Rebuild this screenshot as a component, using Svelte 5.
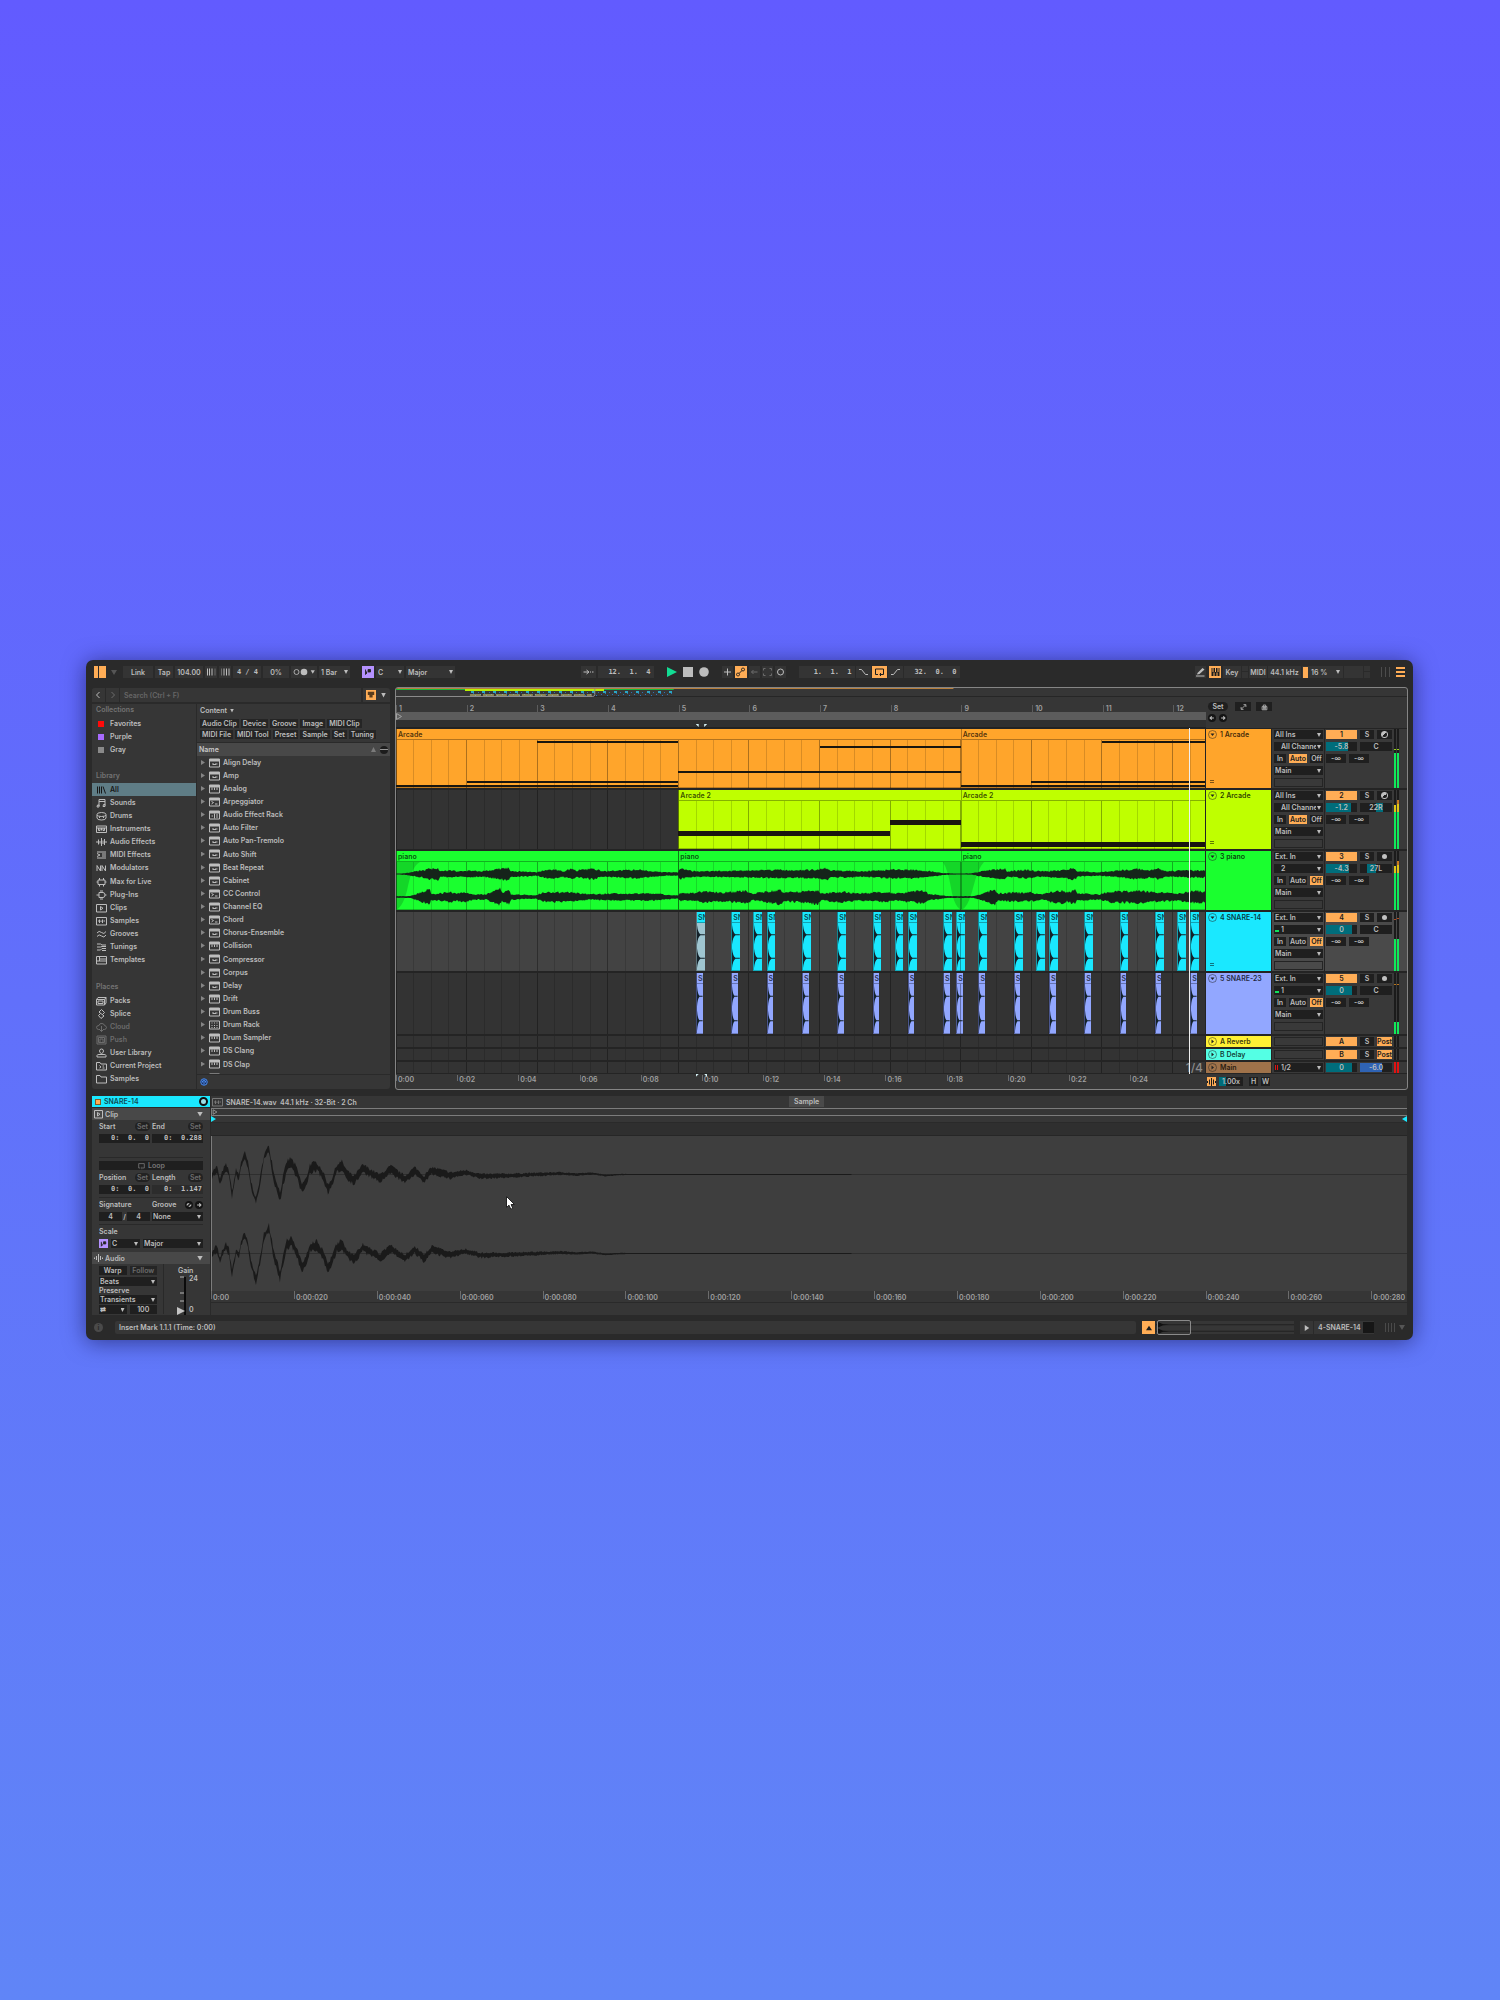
<script lang="ts">
type IconName = keyof typeof icons;
type SideItem = { name: string; icon: IconName; muted?: boolean; active?: boolean };
type Note = { from: number; to: number; top: number; thick?: boolean };
type Clip = { name: string; from: number; to: number; wave?: boolean; selected?: boolean };
type Track = {
	id: number;
	name: string;
	color: string;
	input: string;
	channel: string;
	monitor: 'Auto' | 'Off';
	midi?: boolean;
	menu?: boolean;
	volume: string;
	volumeFill: number;
	pan: string;
	panFrom?: number;
	panTo?: number;
	meter: number;
	peak: number;
	hot?: string;
	clips: Clip[];
	notes?: Note[];
};

// number of bars and time units visible in the arrangement
const BARS = 11.46;
const SECONDS = 13.24;
const SAMPLE_UNITS = 14.43;

const icons = {
	all: 'M3 3v14M7 3v14M11 3v14M14 3l5 14',
	sounds: 'M6 16V3h12v12M6 7h12M3 14h3v4h-4zM15 13h3v4h-4z',
	drums: 'M2 7q0-4 9-4t9 4v7q0 4-9 4t-9-4zM2 8q2 3 9 3t9-3M7 11v3M15 11v3',
	instruments: 'M1 4h20v13h-20zM1 8h20M5 8v5h3v-5M11 8v5M14 8v5h3v-5',
	audio: 'M2 8v4M5 5v10M8 8v5M11 2v16M14 7v7M17 4v12M20 8v4',
	midi: 'M2 4h18M12 8h8M12 12h8M2 16h18M2 7l6 3-6 3',
	modulators: 'M2 16V5l7 11V5M12 16V5l7 11V5',
	max: 'M4 6h14v9h-14zM7 2v4M15 2v4M7 15v4M15 15v4M1 10h3M18 10h3',
	plugins: 'M1 10h5M18 10h3M6 5h8q4 0 4 5t-4 5h-8zM8 2h6M8 18h6',
	clips: 'M1 3h20v15h-20zM9 7l5 3.500-5 3.500z',
	samples: 'M1 3h20v15h-20zM4 10h3M7 7v7M10 9v3M13 7v7M15 10h3',
	grooves: 'M2 8q4-6 9-1t9-2M2 15q4-6 9-1t9-2',
	tunings: 'M2 4h7l3 2h8M2 10h7l3-1h8M2 16h7l3-3h8M12 17h8',
	templates: 'M1 3h20v15h-20zM7 3v9M1 12h20M7 8h14',
	packs: 'M1 7h16v11h-16zM1 7l3-4h16v11l-3 4M17 7l3-4M4 10h10v5h-10z',
	splice: 'M11 1l6 6-4 4 3 3-6 5-5-6 4-4-3-3zM8 7l6 6',
	cloud: 'M8 15H5q-4-1-4-4 0-4 5-4 1-5 6-4 4 0 5 4 4 1 4 4t-4 4h-3M11 8v11M8 16l3 3 3-3',
	push: 'M2 2h18v16h-18zM5 5h12v10h-12zM8 8h6v7h-6z',
	user: 'M11 2q4 0 4 4t-4 5q-4-1-4-5t4-4zM2 18v-3q0-2 4-2h10q4 0 4 2v3z',
	project: 'M1 18V3h7l2 3h11v12zM7 9l3 3-3 2M13 10h3M13 14h4',
	folder: 'M1 18V3h7l2 3h11v12z'
};

const collections = [
	{ name: 'Favorites', color: '#ff0a0a' },
	{ name: 'Purple', color: '#a86bff' },
	{ name: 'Gray', color: '#8a8a8a' }
];

const library: SideItem[] = [
	{ name: 'All', icon: 'all', active: true },
	{ name: 'Sounds', icon: 'sounds' },
	{ name: 'Drums', icon: 'drums' },
	{ name: 'Instruments', icon: 'instruments' },
	{ name: 'Audio Effects', icon: 'audio' },
	{ name: 'MIDI Effects', icon: 'midi' },
	{ name: 'Modulators', icon: 'modulators' },
	{ name: 'Max for Live', icon: 'max' },
	{ name: 'Plug-Ins', icon: 'plugins' },
	{ name: 'Clips', icon: 'clips' },
	{ name: 'Samples', icon: 'samples' },
	{ name: 'Grooves', icon: 'grooves' },
	{ name: 'Tunings', icon: 'tunings' },
	{ name: 'Templates', icon: 'templates' }
];

const places: SideItem[] = [
	{ name: 'Packs', icon: 'packs' },
	{ name: 'Splice', icon: 'splice' },
	{ name: 'Cloud', icon: 'cloud', muted: true },
	{ name: 'Push', icon: 'push', muted: true },
	{ name: 'User Library', icon: 'user' },
	{ name: 'Current Project', icon: 'project' },
	{ name: 'Samples', icon: 'folder' },
	{ name: 'Add Folder...', icon: 'folder' }
];

const filters = [
	['Audio Clip', 'Device', 'Groove', 'Image', 'MIDI Clip'],
	['MIDI File', 'MIDI Tool', 'Preset', 'Sample', 'Set', 'Tuning']
];

const deviceIcons: Record<string, string> = {
	fx: 'M6 12h4M12 12h5M8 13h6',
	inst: 'M6 7v5M11 7v5M16 7v5',
	midi: 'M5 9l4 2-4 3M12 14h5',
	rack: 'M11 7v10M5 12h3M14 10h4M14 14h4',
	pads: 'M5 6h2M10 6h2M15 6h2M5 11h2M10 11h2M15 11h2M5 15h2M10 15h2M15 15h2'
};

const devices = [
	['Align Delay', 'fx'],
	['Amp', 'fx'],
	['Analog', 'inst'],
	['Arpeggiator', 'midi'],
	['Audio Effect Rack', 'rack'],
	['Auto Filter', 'fx'],
	['Auto Pan-Tremolo', 'fx'],
	['Auto Shift', 'fx'],
	['Beat Repeat', 'fx'],
	['Cabinet', 'fx'],
	['CC Control', 'midi'],
	['Channel EQ', 'fx'],
	['Chord', 'midi'],
	['Chorus-Ensemble', 'fx'],
	['Collision', 'inst'],
	['Compressor', 'fx'],
	['Corpus', 'fx'],
	['Delay', 'fx'],
	['Drift', 'inst'],
	['Drum Buss', 'fx'],
	['Drum Rack', 'pads'],
	['Drum Sampler', 'inst'],
	['DS Clang', 'inst'],
	['DS Clap', 'inst'],
	['DS Cymbal', 'inst']
];

const snareHits = [
	4.25, 4.75, 5.0625, 5.25, 5.75, 6.25, 6.75, 7.0625, 7.25, 7.75, 7.9375, 8.25, 8.75, 9.0625,
	9.25, 9.75, 10.25, 10.75, 11.0625, 11.25
];
const ghostHits = snareHits.filter((hit) => hit % 1 !== 0.0625);

// insert marker drawn in both rulers
const selection = [4.24, 4.36];

const tracks: Track[] = [
	{
		id: 1,
		name: 'Arcade',
		color: 'orange',
		input: 'All Ins',
		channel: 'All Channels',
		monitor: 'Auto',
		midi: true,
		menu: true,
		volume: '-5.8',
		volumeFill: 70,
		pan: 'C',
		meter: 60,
		peak: 65,
		clips: [
			{ name: 'Arcade', from: 0, to: 8 },
			{ name: 'Arcade', from: 8, to: 12 }
		],
		notes: [
			{ from: 2, to: 4, top: 12 },
			{ from: 1, to: 4, top: 52 },
			{ from: 0, to: 4, top: 56 },
			{ from: 4, to: 8, top: 42 },
			{ from: 6, to: 8, top: 17 },
			{ from: 8, to: 12, top: 56 },
			{ from: 9, to: 12, top: 52 },
			{ from: 10, to: 12, top: 12 }
		]
	},
	{
		id: 2,
		name: 'Arcade',
		color: 'lime',
		input: 'All Ins',
		channel: 'All Channels',
		monitor: 'Auto',
		midi: true,
		menu: true,
		volume: '-1.2',
		volumeFill: 80,
		pan: '22R',
		panFrom: 50,
		panTo: 72,
		meter: 62,
		peak: 62,
		hot: 'yellow',
		clips: [
			{ name: 'Arcade 2', from: 4, to: 8 },
			{ name: 'Arcade 2', from: 8, to: 12 }
		],
		notes: [
			{ from: 4, to: 7, top: 41, thick: true },
			{ from: 7, to: 8, top: 30, thick: true },
			{ from: 8, to: 12, top: 52, thick: true }
		]
	},
	{
		id: 3,
		name: 'piano',
		color: 'green',
		input: 'Ext. In',
		channel: '2',
		monitor: 'Off',
		volume: '-4.3',
		volumeFill: 73,
		pan: '27L',
		panFrom: 23,
		panTo: 50,
		meter: 62,
		peak: 62,
		hot: 'yellow',
		clips: [
			{ name: 'piano', from: 0, to: 4 },
			{ name: 'piano', from: 4, to: 8 },
			{ name: 'piano', from: 8, to: 12 }
		]
	},
	{
		id: 4,
		name: 'SNARE-14',
		color: 'cyan',
		input: 'Ext. In',
		channel: '1',
		monitor: 'Off',
		menu: true,
		volume: '0',
		volumeFill: 83,
		pan: 'C',
		meter: 55,
		peak: 86,
		hot: 'red',
		clips: snareHits.map((hit, i) => ({
			name: 'SNARE-14',
			from: hit,
			to: hit + 0.125,
			wave: true,
			selected: i === 0
		}))
	},
	{
		id: 5,
		name: 'SNARE-23',
		color: 'blue',
		input: 'Ext. In',
		channel: '1',
		monitor: 'Off',
		volume: '0',
		volumeFill: 83,
		pan: 'C',
		meter: 19,
		peak: 80,
		hot: 'amber',
		clips: ghostHits.map((hit) => ({ name: 'SNARE-23', from: hit, to: hit + 0.0937, wave: true }))
	}
];

const returns = [
	{ id: 'A', name: 'Reverb', color: 'yellow' },
	{ id: 'B', name: 'Delay', color: 'aqua' }
];

const pct = (value: number, total: number): string => `${(value / total) * 100}%`;
const range = (n: number): number[] => Array.from({ length: n }, (_, i) => i);

function makeRandom(seed: number): () => number {
	let s = seed;
	return () => {
		s = (s * 16807) % 2147483647;
		return s / 2147483647;
	};
}

function sampleAt(points: number[][], x: number): number {
	for (let i = 1; i < points.length; i++) {
		const [x0, y0] = points[i - 1];
		const [x1, y1] = points[i];
		if (x <= x1) return y0 + ((y1 - y0) * (x - x0)) / (x1 - x0);
	}
	return points[points.length - 1][1];
}

// piano envelopes: [x, half height]
const pianoTop = [
	[0, 0.5], [9, 1], [17, 2.5], [27, 4], [34, 6], [42, 7], [44, 3], [55, 4], [64, 3], [74, 4],
	[84, 3], [94, 4], [103, 6], [113, 7], [115, 3], [127, 3], [140, 2], [153, 5], [160, 5],
	[167, 3], [175, 6], [180, 4], [197, 6], [207, 3], [223, 4], [243, 5], [257, 3], [270, 2],
	[282, 2], [284, 6], [293, 4], [300, 3], [350, 4], [384, 5], [394, 4], [424, 5], [431, 7],
	[434, 4], [454, 4], [464, 3], [494, 5], [514, 5], [537, 3], [547, 1], [565, 0.5], [577, 1],
	[590, 4], [599, 5], [609, 6], [611, 3], [631, 5], [644, 3], [661, 4], [671, 5], [679, 7],
	[681, 3], [704, 2], [724, 4], [741, 6], [754, 4], [762, 6], [771, 3], [787, 4], [809, 4]
];
const pianoBottom = [
	[0, 1], [13, 1], [20, 3], [27, 6], [34, 9], [35, 4], [44, 4], [55, 6], [60, 4], [69, 6],
	[77, 3], [90, 3], [104, 9], [106, 5], [113, 8], [115, 3], [140, 2], [147, 5], [153, 6],
	[177, 5], [193, 3], [220, 4], [257, 4], [277, 2], [282, 2], [284, 5], [293, 4], [307, 6],
	[327, 5], [350, 7], [357, 4], [384, 8], [389, 5], [404, 6], [422, 8], [425, 4], [447, 6],
	[461, 4], [491, 6], [497, 4], [527, 7], [532, 4], [551, 1], [577, 1], [590, 5], [599, 9],
	[602, 4], [617, 5], [634, 5], [644, 3], [667, 8], [671, 5], [679, 8], [681, 4], [704, 3],
	[714, 6], [741, 7], [764, 5], [781, 4], [801, 7], [809, 6]
];

function envelopePath(points: number[][], center: number, seed: number): string {
	const random = makeRandom(seed);
	const upper: string[] = [];
	const lower: string[] = [];
	for (let x = 0; x <= 809; x += 1) {
		const half = sampleAt(points, x);
		const up = half * (0.65 + random() * 0.4);
		const down = half * (0.65 + random() * 0.4);
		upper.push(`${x} ${(center - up).toFixed(1)}`);
		lower.unshift(`${x} ${(center + down).toFixed(1)}`);
	}
	return `M${upper.join('L')}L${lower.join('L')}Z`;
}

const pianoPath = envelopePath(pianoTop, 12, 11) + envelopePath(pianoBottom, 35, 29);

// sample curve: [x, offset upwards]
const snareCurve = [
	[0, 0], [3, 3], [5, 5], [8, -8], [11, 2], [14, 7], [17, 1], [20, -20], [24, 2], [27, -3],
	[29, 10], [33, 19], [36, 9], [39, -10], [44, -27], [48, -7], [52, 17], [57, 26], [59, 14],
	[63, -7], [66, -15], [68, -23], [71, -7], [75, 9], [79, 12], [84, 4], [90, -14], [94, -9],
	[98, 6], [105, 8], [110, 1], [116, -14], [120, -8], [125, 6], [130, 9], [135, 0], [142, -6],
	[151, 6], [161, 0], [168, -4], [179, 5], [193, -5], [203, 4], [212, -5], [220, 4], [238, -1],
	[254, 2], [270, -2], [300, -1], [349, 1], [365, 0], [381, 1], [394, -1], [408, 0], [1196, 0]
];

function snarePath(center: number, seed: number): string {
	const random = makeRandom(seed);
	const upper: string[] = [];
	const lower: string[] = [];
	for (let x = 0; x <= 640; x += 1) {
		const mid = center - sampleAt(snareCurve, x);
		const body = x < 60 ? 1 : x < 240 ? 2 : x < 420 ? 1.3 - (x - 240) / 240 : 0.4;
		const rough = x < 60 ? 4 : x < 420 ? 5 * (1 - (x - 60) / 360) : 0;
		upper.push(`${x} ${(mid - body - random() * rough).toFixed(1)}`);
		lower.unshift(`${x} ${(mid + body + random() * rough).toFixed(1)}`);
	}
	return `M${upper.join('L')}L${lower.join('L')}Z`;
}

const overviewDots = range(92).map((i) => ({
	x: 75 + i * 2.2,
	y: 3 + ((i * 7) % 5),
	tall: i % 5 === 0
}));
</script>

{#snippet icon(path: string)}
	<svg class="icon" viewBox="0 0 22 20" aria-hidden="true"><path d={path} /></svg>
{/snippet}

{#snippet drop(value: string, label: string, kind = '')}
	<span class="drop {kind}">
		<select aria-label={label}><option>{value}</option></select>
	</span>
{/snippet}

{#snippet grid()}
	<svg class="grid" aria-hidden="true">
		{#each range(46) as i (i)}
			<line
				x1={pct(i / 4, BARS)}
				x2={pct(i / 4, BARS)}
				y1="0"
				y2="100%"
				class:bar={i % 4 === 0}
			/>
		{/each}
	</svg>
{/snippet}

{#snippet fold(open: boolean)}
	<svg class="fold" viewBox="0 0 18 18" aria-hidden="true">
		<circle cx="9" cy="9" r="8" />
		<path d={open ? 'M5 7h8l-4 5z' : 'M7 5l5 4-5 4z'} />
	</svg>
{/snippet}

{#snippet meters(level: number, peak: number, hot = '')}
	<div class="meters {hot}">
		{#each [0, 1] as side (side)}
			<div class="meter">
				<i class="peak" style:bottom="{peak + (hot === 'red' ? side * 2 : 0)}%"></i>
				<i class="level" style:height="{level}%"></i>
			</div>
		{/each}
	</div>
{/snippet}

<main class="desktop">
	<div class="window">
		<header class="toolbar">
			<div class="group">
				<button class="layout" aria-label="Toggle browser"></button>
				<i class="tri dim layout-menu"></i>
				<button class="w30">Link</button>
				<button class="w18">Tap</button>
				<input class="w28" value="104.00" aria-label="Tempo" />
				<button class="w12" aria-label="Nudge down">
					<svg viewBox="0 0 22 20" class="icon"><path d="M3 3v14M7 3v14M12 3v14" /><path d="M18 3v14" opacity="0.4" /></svg>
				</button>
				<button class="w12" aria-label="Nudge up">
					<svg viewBox="0 0 22 20" class="icon"><path d="M8 3v14M13 3v14M18 3v14" /><path d="M3 3v14" opacity="0.4" /></svg>
				</button>
				<input class="w28 mono" value="4 / 4" aria-label="Time signature" />
				<button class="w26">0%</button>
				<button class="w26" aria-label="Metronome">
					<svg class="metro" viewBox="0 0 26 12"><circle cx="4" cy="6" r="3" /><circle cx="13" cy="6" r="4" class="solid" /><path d="M21 4h5l-2.500 4z" class="solid" /></svg>
				</button>
				{@render drop('1 Bar', 'Quantization', 'w31')}
				<button class="scale-toggle" aria-label="Scale mode">
					<svg viewBox="0 0 12 12"><path d="M3 3v6l2-2M6 3h3v3h-3z" /></svg>
				</button>
				{@render drop('C', 'Root note', 'w28')}
				{@render drop('Major', 'Scale', 'w49')}
			</div>
			<div class="space-before"></div>
			<div class="group">
				<button class="w15" aria-label="Follow">
					<svg class="icon" viewBox="0 0 22 20"><path d="M1 10h9M7 6l5 4-5 4M14 10h2M18 10h3" /></svg>
				</button>
				<input class="w56 mono" value="12.  1.  4" aria-label="Arrangement position" />
				<div class="transport">
					<button class="plain" aria-label="Play"><svg viewBox="0 0 10 10"><path d="M0 0l10 5-10 5z" fill="#12dc93" /></svg></button>
					<button class="plain" aria-label="Stop"><svg viewBox="0 0 10 10"><path d="M0 0h10v10h-10z" /></svg></button>
					<button class="plain" aria-label="Record"><svg viewBox="0 0 10 10"><circle cx="5" cy="5" r="4.800" /></svg></button>
				</div>
				<button class="w11" aria-label="Overdub">{@render icon('M11 3v14M4 10h14')}</button>
				<button class="w12 on" aria-label="Automation arm">{@render icon('M6 12a3 3 0 1 0 .1 0M16 2a3 3 0 1 0 .1 0M8 13l6-6')}</button>
				<button class="w11 muted" aria-label="Re-enable automation">{@render icon('M5 10h12M9 6l-4 4 4 4')}</button>
				<button class="w11 muted" aria-label="Capture">{@render icon('M3 7V3h4M15 3h4v4M19 13v4h-4M7 17H3v-4')}</button>
				<button class="w11" aria-label="Session record"><svg class="icon" viewBox="0 0 22 20"><circle cx="11" cy="10" r="6" /></svg></button>
			</div>
			<div class="group tight loop-group">
				<input class="w56 mono" value="1.  1.  1" aria-label="Loop start" />
				<button class="w15" aria-label="Punch in">{@render icon('M2 5h5l8 10h5')}</button>
				<button class="w15 on" aria-label="Loop">{@render icon('M8 15H3V4h16v11h-4M13 12v6M17 15h-6')}</button>
				<button class="w15" aria-label="Punch out">{@render icon('M2 15h5l8-10h5')}</button>
				<input class="w56 mono" value="32.  0.  0" aria-label="Loop length" />
			</div>
			<div class="space-after"></div>
			<div class="group tight">
				<button class="w11" aria-label="Draw mode"><svg class="icon pen" viewBox="0 0 22 20"><path d="M5 12l10-10 4 3-10 9-5 1z" /><path d="M2 17h17v2h-17z" /></svg></button>
				<button class="w12 on piano-keys" aria-label="Computer MIDI keyboard"><svg class="icon keys" viewBox="0 0 22 20"><path d="M3 2h16v16h-16z" /><path class="lines" d="M8 11v7M14 11v7M6 2v8M11 2v8M16 2v8" /></svg></button>
				<button class="w18">Key</button>
				<i class="lamp"></i>
				<button class="w18">MIDI</button>
				<button class="w33">44.1 kHz</button>
				<div class="cpu"><i></i>16 %<b class="tri small"></b></div>
				<i class="lamp wide"></i>
				<i class="lamp"></i>
				<i class="bars3"></i>
				<button class="menu" aria-label="Menu"></button>
			</div>
		</header>

		<div class="workspace">
			<aside class="browser">
				<div class="search">
					<button class="nav" aria-label="Back">{@render icon('M13 4l-6 6 6 6')}</button>
					<button class="nav muted" aria-label="Forward">{@render icon('M9 4l6 6-6 6')}</button>
					<input type="search" placeholder="Search (Ctrl + F)" aria-label="Search" />
					<button class="filter" aria-label="Filters"><svg viewBox="0 0 10 10"><path d="M1 1h8v4h-2v3h-4v-3h-2z" /></svg></button>
					<i class="tri filter-menu"></i>
				</div>
				<div class="browser-body">
					<nav class="sidebar">
						<h2>Collections</h2>
						<ul class="collections">
							{#each collections as item (item.name)}
								<li><a href="#{item.name}"><i class="swatch" style:background={item.color}></i>{item.name}</a></li>
							{/each}
						</ul>
						<h2>Library</h2>
						<ul>
							{#each library as item (item.name)}
								<li class:active={item.active}><a href="#{item.icon}">{@render icon(icons[item.icon])}{item.name}</a></li>
							{/each}
						</ul>
						<h2>Places</h2>
						<ul>
							{#each places as item (item.name)}
								<li class:muted={item.muted}><a href="#{item.icon}">{@render icon(icons[item.icon])}{item.name}</a></li>
							{/each}
						</ul>
					</nav>
					<section class="content">
						<div class="content-head">
							<h3>Content <i class="tri small"></i></h3>
							{#each filters as row, i (i)}
								<div class="tags">
									{#each row as tag (tag)}<button>{tag}</button>{/each}
								</div>
							{/each}
						</div>
						<div class="name-row">Name<span class="sort"></span><button class="more" aria-label="Columns"></button></div>
						<ul class="devices">
							{#each devices as [name, kind] (name)}
								<li>
									<i class="arrow"></i>
									<svg class="icon device" viewBox="0 0 22 20" aria-hidden="true">
										<path d="M1 2h20v16h-20z" />
										{#if kind !== 'pads'}<path class="cap" d="M1 3h20v3h-20z" />{/if}
										<path d={deviceIcons[kind]} />
									</svg>
									{name}
								</li>
							{/each}
						</ul>
						<div class="preview">
							<svg viewBox="0 0 16 16" aria-hidden="true"><circle cx="8" cy="8" r="6.500" /><path d="M8 6v7M5 9V6q3-4 6 0v3" /></svg>
						</div>
					</section>
				</div>
			</aside>

			<section class="arrangement">
				<svg class="overview" viewBox="0 0 1012 8" preserveAspectRatio="none" aria-hidden="true">
					<path d="M0 .5H558" stroke="#b9803c" />
					<path d="M0 1.500H278" stroke="#18b936" />
					<path d="M69 1.500H208" stroke="#b9f000" stroke-width="2" />
					{#each overviewDots as dot (dot.x)}
						<rect x={dot.x} y={dot.y - 0.5} width={dot.tall ? 3 : 1} height={dot.tall ? 2 : 1} fill={dot.tall ? '#2aa7c4' : '#2d73b8'} />
					{/each}
					<path d="M74 7H196" stroke="#e0d878" stroke-dasharray="11 2" />
					<path d="M0 8.500H197q2 0 2-2V1" stroke="#8c8c8c" fill="none" />
				</svg>

				<div class="ruler-row">
					<div class="lane ruler">
						{#each range(12) as i (i)}
							<span style:left={pct(i, BARS)}>{i + 1}</span>
						{/each}
						<svg class="locator" viewBox="0 0 6 7" aria-hidden="true"><path d="M.5.500l5 3-5 3z" /></svg>
						{#each selection as at, i (i)}
							<i class="mark" class:end={i === 1} style:left={pct(at, BARS)}></i>
						{/each}
					</div>
					<div class="set-buttons">
						<div><button class="set">Set</button><button class="sq" aria-label="Zoom">{@render icon('M6 15l10-10M11 4h6v6M5 10v6h6')}</button><button class="sq" aria-label="Lock">{@render icon('M5 9h12v8h-12zM8 9V5h6v4M7 11h8M7 13h8M7 15h8')}</button></div>
						<div><button class="dot" aria-label="Previous locator">{@render icon('M18 10H5M10 4l-6 6 6 6')}</button><button class="dot" aria-label="Next locator">{@render icon('M4 10h13M12 4l6 6-6 6')}</button></div>
					</div>
				</div>

				<div class="tracks">
					{#each tracks as track (track.id)}
						<div class="track {track.color}">
							<div class="lane">
								{#each track.clips as clip (clip.from)}
									<div
										class="clip"
										class:hit={clip.wave}
										class:selected={clip.selected}
										style:left={pct(clip.from, BARS)}
										style:width={pct(clip.to - clip.from, BARS)}
									>
										<div class="clip-name">{clip.name}</div>
										{#if clip.wave}
											<svg viewBox="0 0 9 48" preserveAspectRatio="none">
												<path d="M0 2Q1 10 4 11.500H9V12.500H4Q1 14 0 22ZM0 26Q1 34 4 35.500H9V36.500H4Q1 38 0 46Z" />
											</svg>
										{/if}
									</div>
								{/each}
								{@render grid()}
								{#each track.notes ?? [] as note, i (i)}
									<i
										class="note"
										class:thick={note.thick}
										style:left={pct(note.from, BARS)}
										style:width={pct(note.to - note.from, BARS)}
										style:top="{note.top}px"
									></i>
								{/each}
								{#if track.color === 'green'}
									<svg class="piano" viewBox="0 0 809 48" preserveAspectRatio="none" aria-hidden="true">
										<path class="fade" d="M0 0H24Q16 4 12 24T0 48ZM547 0H588Q582 6 577 26T565 48Q558 44 555 26T547 0Z" />
										<path d={pianoPath} />
									</svg>
								{/if}
							</div>
							<div class="title">
								{@render fold(true)}{track.id} {track.name}
								{#if track.menu}<i class="grip"></i>{/if}
							</div>
							<div class="io">
								{@render drop(track.input, 'Input type')}
								<div class="channel" class:live={track.id > 3}>{@render drop(track.channel, 'Input channel')}</div>
								<div class="monitor">
									<button>In</button>
									<button class:on={track.monitor === 'Auto'}>Auto</button>
									<button class:on={track.monitor === 'Off'}>Off</button>
								</div>
								{@render drop('Main', 'Output')}
								<div class="slot"></div>
							</div>
							<div class="mixer">
								<button class="on">{track.id}</button>
								<button class="solo">S</button>
								<button class="arm" class:midi={track.midi} aria-label="Arm"></button>
								<div class="value"><i style:width="{track.volumeFill}%"></i><span>{track.volume}</span></div>
								<div class="value pan">
									{#if track.panFrom}<i style:left="{track.panFrom}%" style:width="{(track.panTo ?? 0) - track.panFrom}%"></i>{/if}
									<span>{track.pan}</span>
								</div>
								<div class="sends"><span>-∞</span><span>-∞</span></div>
							</div>
							{@render meters(track.meter, track.peak, track.hot)}
						</div>
					{/each}

					{#each returns as item (item.id)}
						<div class="track short {item.color}">
							<div class="lane">{@render grid()}</div>
							<div class="title">{@render fold(false)}{item.id} {item.name}</div>
							<div class="io"><div class="slot"></div></div>
							<div class="mixer">
								<button class="on">{item.id}</button>
								<button class="solo">S</button>
								<button class="on">Post</button>
							</div>
							{@render meters(0, -20)}
						</div>
					{/each}
					<div class="track short brown">
						<div class="lane">{@render grid()}<span class="zoom-level">1/4</span></div>
						<div class="title">{@render fold(false)}Main</div>
						<div class="io"><div class="channel main-out">{@render drop('1/2', 'Main output')}</div></div>
						<div class="mixer">
							<div class="value"><i style:width="83%"></i><span>0</span></div>
							<div class="value pan cue"><i style:width="70%"></i><span>-6.0</span></div>
						</div>
						{@render meters(0, -20, 'clip-lights')}
					</div>
					<div class="cursor-layer"><i style:left={pct(11.23, BARS)}></i></div>
				</div>

				<div class="time-row">
					<div class="lane times">
						{#each range(13) as i (i)}
							<span style:left={pct(i, SECONDS)}>0:{String(i * 2).padStart(2, '0')}</span>
						{/each}
						{#each selection as at, i (i)}
							<i class="mark" class:end={i === 0} style:left={pct(at, BARS)}></i>
						{/each}
					</div>
					<div class="footer-buttons">
						<button class="on" aria-label="Waveforms">{@render icon('M3 8v4M7 5v10M11 2v16M15 5v10M19 8v4')}</button>
						<div class="value rate"><i style:width="30%"></i><span>1.00x</span></div>
						<button>H</button><button>W</button>
					</div>
				</div>
			</section>
		</div>

		<div class="detail">
			<section class="clip-panel">
				<div class="clip-title"><i class="swatch"></i>SNARE-14<span class="save"></span></div>
				<div class="panel-head"><svg class="icon" viewBox="0 0 22 20"><path d="M3 3h16v15h-16zM9 7l5 3.500-5 3.500z" /></svg>Clip<i class="tri"></i></div>
				<div class="clip-body">
					<div class="pair">
						<div class="field"><label for="start">Start</label><button class="pill">Set</button><input id="start" class="mono" value="0:  0.  0" /></div>
						<div class="field"><label for="end">End</label><button class="pill">Set</button><input id="end" class="mono" value="0:  0.288" /></div>
					</div>
					<button class="loop">{@render icon('M8 15H4V4h14v11h-4M12 12v6')}Loop</button>
					<div class="pair">
						<div class="field"><label for="position">Position</label><button class="pill">Set</button><input id="position" class="mono" value="0:  0.  0" /></div>
						<div class="field lit"><label for="length">Length</label><button class="pill">Set</button><input id="length" class="mono" value="0:  1.147" /></div>
					</div>
					<div class="pair ruled">
						<div class="field">
							<label for="numerator">Signature</label>
							<div class="signature"><input id="numerator" value="4" />/<input aria-label="Denominator" value="4" /></div>
						</div>
						<div class="field">
							<span>Groove</span><span class="rounds"><button class="dot" aria-label="Hot swap">{@render icon('M4 12q0-7 8-7M18 8q0 7-8 7')}</button><button class="dot" aria-label="Commit groove">{@render icon('M4 10h13M12 4l6 6-6 6')}</button></span>
							{@render drop('None', 'Groove')}
						</div>
					</div>
					<div class="ruled">
						<span>Scale</span>
						<div class="scale-row">
							<button class="scale-toggle" aria-label="Clip scale"><svg viewBox="0 0 12 12"><path d="M3 3v6l2-2M6 3h3v3h-3z" /></svg></button>
							{@render drop('C', 'Clip root note', 'root')}
							{@render drop('Major', 'Clip scale name', 'grow')}
						</div>
					</div>
				</div>
				<div class="panel-head"><svg class="icon" viewBox="0 0 22 20"><path d="M3 9v3M7 6v8M11 2v16M15 6v8M19 9v3" /></svg>Audio<i class="tri"></i></div>
				<div class="audio-body">
					<div class="warp">
						<div class="warp-buttons"><button>Warp</button><button class="muted">Follow</button></div>
						{@render drop('Beats', 'Warp mode')}
						<span>Preserve</span>
						{@render drop('Transients', 'Preserve')}
						<div class="warp-buttons">{@render drop('⇄', 'Loop mode')}<input value="100" aria-label="Envelope" /></div>
					</div>
					<div class="gain">
						<label for="gain">Gain</label>
						<div class="gain-slider">
							<input id="gain" type="range" min="-70" max="24" value="0" />
							<svg viewBox="0 0 24 42" aria-hidden="true">
								<path d="M2 2h4M2 18h4M2 26h4" stroke="#b5b5b5" />
								<path d="M6 2h2v40h-2z" fill="#0b0b0b" />
								<path d="M-1 32l8 4-8 4z" fill="#c4c4c4" />
							</svg>
							<span>24</span><span>0</span>
						</div>
					</div>
				</div>
			</section>

			<section class="sample">
				<div class="sample-head">
					<svg class="icon" viewBox="0 0 22 20"><path d={icons.samples} /></svg>SNARE-14.wav&nbsp; 44.1 kHz · 32-Bit · 2 Ch
					<button class="tab">Sample</button>
				</div>
				<div class="sample-loop"><svg viewBox="0 0 6 8"><path d="M.5 1l5 3-5 3z" /></svg></div>
				<div class="sample-markers"><i class="tri-start"></i><i class="tri-end"></i></div>
				<div class="sample-scrub"></div>
				<div class="sample-wave">
					<svg class="waveform" viewBox="0 0 1196 156" preserveAspectRatio="none" aria-hidden="true">
						<path class="zero" d="M0 38.500H1196M0 117.500H1196" />
						<path d={snarePath(38.5, 7)} />
						<path d={snarePath(117.5, 19)} />
					</svg>
					<svg class="pointer" viewBox="0 0 9 14" aria-hidden="true"><path d="M.5.500v11l2.500-2.300 1.800 4 2-.9-1.700-3.800h3.400z" /></svg>
				</div>
				<div class="sample-times">
					{#each range(15) as i (i)}
						<span style:left={pct(i, SAMPLE_UNITS)}>{i === 0 ? '0:00' : `0:00:${String(i * 20).padStart(3, '0')}`}</span>
					{/each}
				</div>
				<div class="sample-scroll"></div>
			</section>
		</div>

		<footer class="status">
			<span class="info">i</span>
			<p>Insert Mark 1.1.1 (Time: 0:00)</p>
			<button class="up on" aria-label="Show detail view"><svg viewBox="0 0 8 8"><path d="M4 1l4 6h-8z" /></svg></button>
			<div class="mini">
				<svg viewBox="0 0 138 12" preserveAspectRatio="none" aria-hidden="true"><path d="M0 3.500h138M0 9.500h138" stroke="#222" /><path d="M2 1l5 2 6 .5-6 .5-5 2zM2 7l5 2 6 .5-6 .5-5 2z" fill="#111" /></svg>
				<i></i>
			</div>
			<button class="up dark" aria-label="Preview clip"><svg viewBox="0 0 8 8"><path d="M1 0l6 4-6 4z" /></svg></button>
			<div class="clip-chip">4-SNARE-14<i></i></div>
			<span class="levels"><i class="level-bars"></i><i class="tri dim"></i></span>
		</footer>
	</div>
</main>

<style>
:global(body) {
	margin: 0;
}

.desktop {
	box-sizing: border-box;
	min-height: 100vh;
	padding: 40px 87px 40px 86px;
	display: flex;
	align-items: center;
	background: linear-gradient(#625bff, #6085f7);
	color: #bdbdbd;
	font-family: Inter, 'Liberation Sans', sans-serif;
	font-size: 7px;
	font-weight: 600;
	line-height: 9px;

	& * {
		box-sizing: border-box;
	}
}

.window {
	flex: 1;
	min-width: 0;
	padding: 6px;
	display: flex;
	flex-direction: column;
	gap: 6px;
	border-radius: 7px;
	background: #2a2a2a;
	box-shadow: 0 2px 22px rgba(10, 10, 60, 0.55);
}

button,
input,
select {
	margin: 0;
	padding: 0;
	border: 0;
	border-radius: 0;
	min-width: 0;
	background: #1f1f1f;
	color: inherit;
	font: inherit;
	appearance: none;
}

button {
	display: flex;
	justify-content: center;
	align-items: center;
	white-space: nowrap;
	overflow: hidden;
}

ul,
h2,
h3,
p {
	margin: 0;
	padding: 0;
	list-style: none;
	font: inherit;
}

a {
	color: inherit;
	text-decoration: none;
}

i {
	display: block;
	flex: none;
}

.icon {
	width: 11px;
	height: 10px;
	flex: none;
	fill: none;
	stroke: currentColor;
	stroke-width: 2;
}

.mono {
	font-family: 'DejaVu Sans Mono', monospace;
	text-align: right;
	white-space: pre;
}

.muted {
	color: #6c6c6c;
}

.on {
	background: #ffad56;
	color: #1c1c1c;
}

.tri {
	width: 6px;
	height: 5px;
	background: currentColor;
	clip-path: polygon(0 0, 100% 0, 50% 100%);

	&.small {
		width: 4px;
		height: 4px;
	}
	&.dim {
		background: #555;
	}
}

.drop {
	position: relative;
	display: flex;
	min-width: 0;
	height: 9px;
	background: #1f1f1f;

	& select {
		flex: 1;
		width: 100%;
		padding-left: 1px;
		padding-right: 7px;
		background: transparent;
		overflow: hidden;
	}
	&::after {
		content: '';
		position: absolute;
		right: 2px;
		top: 3px;
		width: 4px;
		height: 4px;
		background: currentColor;
		clip-path: polygon(0 0, 100% 0, 50% 100%);
		pointer-events: none;
	}
}

/* toolbar */
.toolbar {
	display: flex;
	height: 16px;
	padding: 0 2px;

	& .group {
		display: flex;
		gap: 2px;
		height: 12px;
	}
	& .tight {
		gap: 1px;
	}
	& button:not(.on, .plain, .layout, .menu, .scale-toggle),
	& input {
		background: #343434;
	}
	& .mono {
		padding-right: 3px;
	}
	& input:not(.mono) {
		text-align: center;
	}
	& .loop-group {
		margin-left: 13px;
	}
	& .drop {
		height: 12px;
		background: #343434;

		& select {
			padding-left: 2px;
		}
		&::after {
			top: 4px;
		}
	}
}
.space-before {
	flex: 8;
}
.space-after {
	flex: 15;
}
.w11 {
	width: 11px;
}
.w12 {
	width: 12px;
}
.w15 {
	width: 15px;
}
.w18 {
	width: 18px;
}
.w26 {
	width: 26px;
}
.w28 {
	width: 28px;
}
.w30 {
	width: 30px;
}
.w31 {
	width: 31px;
}
.w33 {
	width: 33px;
}
.w49 {
	width: 49px;
}
.w56 {
	width: 56px;
}
.layout {
	width: 12px;
	background: linear-gradient(90deg, #ffad56 4px, #2a2a2a 4px 5px, #ffad56 5px);
}
.layout-menu {
	margin: 4px 4px 0 3px;
}
.metro {
	width: 22px;
	height: 10px;
	fill: none;
	stroke: currentColor;

	& .solid {
		fill: currentColor;
		stroke: none;
	}
}
.scale-toggle {
	width: 12px;
	background: #b592ff;

	& svg {
		width: 10px;
		height: 10px;
		fill: #222;
		stroke: #222;
	}
}
.toolbar .scale-toggle {
	margin-left: 10px;
}
.transport {
	display: flex;
	gap: 6px;
	padding: 0 11px;
}
.plain {
	width: 10px;
	background: none;

	& svg {
		width: 10px;
		height: 10px;
		fill: #bdbdbd;
	}
}
.pen {
	fill: currentColor;
	stroke: none;
}
.piano-keys {
	margin: 0 1px 0 2px;
}
.keys {
	fill: #1c1c1c;
	stroke: none;

	& .lines {
		stroke: #ffad56;
	}
}
.lamp {
	width: 6px;
	background: linear-gradient(#343434 5px, #2a2a2a 5px 6px, #343434 6px);

	&.wide {
		width: 19px;
		background: #343434;
	}
}
.cpu {
	display: flex;
	align-items: center;
	gap: 3px;
	width: 41px;
	padding: 0 3px 0 1px;
	background: #343434;

	& i {
		width: 5px;
		height: 11px;
		background: #ffad56;
	}
	& b {
		margin-left: auto;
	}
}
.bars3 {
	width: 9px;
	margin: 1px 5px 1px 10px;
	background: repeating-linear-gradient(90deg, #4c4c4c 0 1px, transparent 1px 4px);
}
.menu {
	width: 9px;
	margin-top: 1px;
	background: linear-gradient(#ffad56 0 2px, transparent 2px 4px, #ffad56 4px 6px, transparent 6px 8px, #ffad56 8px 10px, transparent 10px);
}

/* browser */
.workspace {
	display: flex;
	gap: 5px;
	margin-right: -1px;
}
.browser {
	width: 298px;
	height: 401px;
	display: flex;
	flex-direction: column;
	gap: 2px;
	overflow: hidden;
	border-radius: 3px;
}
.search {
	display: flex;
	align-items: center;
	height: 14px;
	background: #363636;

	& .nav {
		width: 14px;
		height: 14px;
		background: #363636;
		border-right: 1px solid #2a2a2a;
	}
	& input {
		flex: 1;
		height: 14px;
		padding-left: 4px;
		background: #363636;
		border-right: 2px solid #2a2a2a;
	}
	& input::placeholder {
		color: #666;
		opacity: 1;
	}
}
.filter {
	width: 10px;
	height: 10px;
	margin-left: 3px;
	background: #ffad56;

	& svg {
		width: 8px;
		height: 8px;
		fill: #5a3c1c;
	}
}
.filter-menu {
	width: 5px;
	margin: 0 4px 0 5px;
}
.browser-body {
	flex: 1;
	min-height: 0;
	display: flex;
	gap: 1px;
}
.sidebar {
	width: 104px;
	background: #363636;
	overflow: hidden;

	& h2 {
		padding: 1px 4px 3px;
		line-height: 9px;
		color: #747474;
	}
	& ul + h2 {
		margin-top: 14px;
	}
	& li a {
		display: flex;
		align-items: center;
		gap: 3px;
		height: 13px;
		padding-left: 4px;
	}
	& .collections a {
		gap: 6px;
		padding-left: 6px;
	}
	& li:nth-child(7n) {
		padding-bottom: 1px;
	}
	& .active {
		background: #5f7d86;
		color: #161616;
	}
}
.swatch {
	width: 6px;
	height: 6px;
	background: #ffad56;
}
.content {
	flex: 1;
	min-width: 0;
	display: flex;
	flex-direction: column;
	background: #363636;
}
.content-head {
	padding: 2px 3px 0;
	height: 38px;
	display: flex;
	flex-direction: column;
	gap: 2px;

	& h3 {
		display: flex;
		align-items: center;
		gap: 3px;
		padding-bottom: 2px;
	}
}
.tags {
	display: flex;
	gap: 2px;

	& button {
		height: 9px;
		padding: 0 2px;
		background: #252525;
	}
}
.name-row {
	display: flex;
	align-items: center;
	height: 14px;
	padding: 0 2px;
	background: #484848;
	border-top: 1px solid #2a2a2a;
	color: #c8c8c8;

	& .sort {
		width: 5px;
		height: 5px;
		margin-left: auto;
		margin-right: 4px;
		background: #7a7a7a;
		clip-path: polygon(50% 0, 100% 100%, 0 100%);
	}
	& .more {
		width: 8px;
		height: 8px;
		border-radius: 4px;
		background: linear-gradient(#1c1c1c 3px, #999 3px 4px, #1c1c1c 4px);
	}
}
.devices {
	flex: 1;
	min-height: 0;
	overflow: hidden;

	& li {
		display: flex;
		align-items: center;
		height: 13px;
		padding-left: 4px;
		white-space: nowrap;
	}
	& li:nth-child(8n) {
		height: 14px;
	}
	& .arrow {
		width: 4px;
		height: 5px;
		background: #858585;
		clip-path: polygon(0 0, 100% 50%, 0 100%);
	}
	& .device {
		margin: 0 3px 0 4px;
	}
	& .cap {
		fill: currentColor;
	}
}
.preview {
	height: 15px;
	padding: 3px;
	border-top: 1px solid #2a2a2a;

	& svg {
		display: block;
		width: 8px;
		height: 8px;
		fill: #1a2f5c;
		stroke: #4a8cf0;
		stroke-width: 2;
	}
}

/* arrangement */
.arrangement {
	flex: 1;
	min-width: 0;
	margin-top: -1px;
	display: flex;
	flex-direction: column;
	border: 1px solid #858585;
	border-radius: 3px;
	background: #363636;
	overflow: hidden;
}
.overview {
	width: 100%;
	height: 9px;
	border-bottom: 1px solid #262626;
	overflow: visible;
	shape-rendering: crispEdges;
}
.lane {
	position: relative;
	flex: 1;
	min-width: 0;
	overflow: hidden;
}
.ruler-row,
.time-row {
	display: flex;
}
.ruler-row {
	height: 31px;
}
.ruler {
	background: linear-gradient(#363636 15px, #5c5c5c 15px 23px, #303030 23px 30px, #222 30px);
	color: #a0a0a0;

	& span {
		position: absolute;
		top: 8px;
		height: 7px;
		padding-left: 2px;
		line-height: 8px;
		border-left: 1px solid #5c5c5c;
	}
	& .mark {
		bottom: 1px;
	}
}
.locator {
	position: absolute;
	left: 0;
	top: 16px;
	width: 6px;
	height: 7px;
	fill: none;
	stroke: #a0a0a0;
}
.mark {
	position: absolute;
	width: 3px;
	height: 3px;
	background: #d4f0f4;
	clip-path: polygon(0 0, 100% 0, 100% 100%);

	&.end {
		clip-path: polygon(0 0, 100% 0, 0 100%);
	}
}
.set-buttons {
	display: flex;
	flex-direction: column;
	gap: 3px;
	width: 201px;
	padding: 5px 2px 0;

	& div {
		display: flex;
		gap: 3px;
	}
	& .set {
		width: 20px;
		height: 9px;
		border-radius: 5px;
		margin-right: 4px;
	}
	& .sq {
		width: 16px;
		height: 9px;
		margin-right: 2px;

		& .icon {
			width: 9px;
			height: 8px;
		}
	}
}
.dot {
	width: 8px;
	height: 8px;
	border-radius: 4px;
	background: #141414;

	& .icon {
		width: 6px;
		height: 6px;
		stroke-width: 4;
	}
}
.tracks {
	position: relative;
	display: flex;
	flex-direction: column;
	gap: 2px;
	padding: 1px 0;
	background: #242424;
}
.track {
	display: flex;
	height: 59px;

	& .lane {
		background: #333;
		margin-right: 1px;
	}
	&.blue {
		height: 61px;
	}
	&.short {
		height: 11px;
	}
	&.cyan .lane {
		background: #434343;
	}
	&.cyan .io,
	&.cyan .mixer,
	&.cyan .meters {
		background: #4a4a4a;
	}
}
.grid {
	position: absolute;
	z-index: 1;
	inset: 0;
	width: 100%;
	height: 100%;
	shape-rendering: crispEdges;
	stroke: rgba(0, 0, 0, 0.15);

	& .bar {
		stroke: rgba(0, 0, 0, 0.32);
	}
}
.clip {
	position: absolute;
	top: 0;
	bottom: 0;
	background: var(--color);
	overflow: hidden;
	border-left: 1px solid rgba(0, 0, 0, 0.3);
	border-bottom: 1px solid rgba(0, 0, 0, 0.25);
	color: rgba(0, 0, 0, 0.72);

	& svg {
		display: block;
		width: 100%;
		height: calc(100% - 11px);
		fill: #14222a;
	}
}
.orange .clip,
.lime .clip,
.green .clip {
	overflow: visible;
}
.clip-name {
	position: relative;
	z-index: 2;
	height: 11px;
	padding: 1px;
	border-bottom: 1px solid rgba(0, 0, 0, 0.3);
	background: var(--color);
	white-space: nowrap;
	overflow: hidden;
}
.hit.selected {
	background: #9fc5d0;
}
.blue .hit {
	border-left: 1px solid #4b5790;
}
.orange {
	--color: #ffa52b;
}
.lime {
	--color: #bfff00;
}
.green {
	--color: #1aff2f;
}
.cyan {
	--color: #1ae8ff;
}
.blue {
	--color: #92a7ff;
}
.yellow {
	--color: #fff034;
}
.aqua {
	--color: #54ffe4;
}
.brown {
	--color: #9f724a;
}
.note {
	position: absolute;
	z-index: 2;
	height: 2px;
	background: #19160f;

	&.thick {
		height: 5px;
	}
}
.piano {
	position: absolute;
	z-index: 2;
	left: 0;
	top: 11px;
	width: 100%;
	height: 48px;
	fill: #15241a;

	& .fade {
		fill: rgba(0, 70, 20, 0.22);
	}
}
.title {
	position: relative;
	display: flex;
	gap: 3px;
	width: 65px;
	padding: 1px 2px;
	background: var(--color);
	color: rgba(0, 0, 0, 0.78);
	white-space: nowrap;
}
.fold {
	width: 9px;
	height: 9px;
	fill: none;
	stroke: #222;
	stroke-width: 1;

	& path {
		fill: #222;
		stroke: none;
	}
}
.grip {
	position: absolute;
	left: 4px;
	bottom: 4px;
	width: 4px;
	height: 4px;
	background: repeating-linear-gradient(rgba(0, 0, 0, 0.5) 0 1px, transparent 1px 2px);
}
.io {
	width: 53px;
	margin-right: 1px;
	padding: 1px 1px 0 2px;
	display: flex;
	flex-direction: column;
	gap: 3px;
	background: #393939;
	border-left: 1px solid #242424;
}
.channel {
	position: relative;
	display: flex;
	background: #1f1f1f;

	& .drop {
		flex: 1;
		padding-left: 6px;
	}
	&.live::before {
		content: '';
		position: absolute;
		z-index: 1;
		left: 1px;
		top: 5px;
		width: 4px;
		height: 2px;
		background: #12e05c;
	}
	&.main-out::before {
		content: '';
		position: absolute;
		z-index: 1;
		left: 1px;
		top: 2px;
		width: 4px;
		height: 5px;
		background: repeating-linear-gradient(90deg, #e01212 0 1px, transparent 1px 2px);
	}
}
.monitor {
	display: flex;
	justify-content: space-between;

	& button {
		height: 9px;
	}
	& button:first-child {
		width: 12px;
	}
	& button:nth-child(2) {
		width: 18px;
	}
	& button:last-child {
		width: 13px;
	}
	& .on {
		background: #ffad56;
	}
}
.slot {
	height: 9px;
	border: 1px solid #242424;
}
.mixer {
	width: 68px;
	display: grid;
	grid-template-columns: 31px 14px 15px;
	grid-auto-rows: 9px;
	gap: 3px;
	align-content: start;
	padding: 1px 0 0 1px;
	background: #393939;
}
.solo,
.arm {
	height: 9px;
}
.arm::before {
	content: '';
	width: 5px;
	height: 5px;
	border-radius: 3px;
	background: #c0c0c0;
}
.arm.midi::before {
	background: linear-gradient(135deg, #c0c0c0 50%, #1f1f1f 50%);
	border: 1px solid #c0c0c0;
}
.value {
	position: relative;
	height: 9px;
	background: #1f1f1f;
	overflow: hidden;
	text-align: center;

	& i {
		position: absolute;
		top: 0;
		bottom: 0;
		left: 0;
		background: #006d7b;
	}
	& span {
		position: relative;
	}
}
.pan {
	grid-column: span 2;
}
.cue i {
	background: #2f63b4;
}
.sends {
	grid-column: span 3;
	display: flex;
	gap: 3px;

	& span {
		width: 20px;
		background: #1f1f1f;
		text-align: center;
	}
}
.meters {
	width: 14px;
	padding-left: 1px;
	display: flex;
	gap: 1px;
	background: #393939;
}
.meter {
	position: relative;
	width: 2px;
	height: 100%;
	background: #1b1b1b;
	overflow: hidden;

	& i {
		position: absolute;
		left: 0;
		right: 0;
		bottom: 0;
		background: #10e85a;
	}
	& .peak {
		height: 1px;
		background: #9ad31c;
	}
}
.meters.yellow .peak {
	height: 7px;
	background: #e0c414;
}
.meters.yellow .meter:last-child .peak {
	height: 12px;
	background: linear-gradient(#c87a1c 4px, #e0c414 4px);
}
.meters.red .peak {
	background: #b04a20;
}
.meters.amber .peak {
	background: #b8741c;
}
.clip-lights .meter {
	background: #e01212;
}
.zoom-level {
	position: absolute;
	z-index: 2;
	right: 2px;
	bottom: 0;
	color: #8a8a8a;
	font-size: 12px;
	font-weight: 500;
	line-height: 11px;
}
.cursor-layer {
	position: absolute;
	z-index: 3;
	inset: 0 202px 0 0;
	pointer-events: none;

	& i {
		position: absolute;
		top: 0;
		bottom: 0;
		width: 1px;
		background: #f0f0f0;
	}
}
.time-row {
	height: 15px;
}
.times span {
	position: absolute;
	top: 1px;
	padding-left: 2px;
	color: #a0a0a0;
	line-height: 10px;

	&::before {
		content: '';
		position: absolute;
		left: 0;
		top: 0;
		width: 1px;
		height: 6px;
		background: #6c6c6c;
	}
}
.footer-buttons {
	display: flex;
	gap: 3px;
	width: 201px;
	padding: 3px 1px 0;

	& button {
		width: 9px;
		height: 9px;
	}
	& .rate {
		width: 24px;
		margin-right: 3px;
	}
}

/* clip detail */
.detail {
	display: flex;
	gap: 1px;
	height: 219px;
	overflow: hidden;
}
.clip-panel {
	width: 118px;
	background: #363636;
	overflow: hidden;
}
.clip-title {
	display: flex;
	align-items: center;
	gap: 3px;
	height: 12px;
	padding: 0 2px 0 3px;
	background: #1ae8ff;
	color: #0f4a52;
	border-bottom: 1px solid #2a2a2a;

	& .save {
		width: 9px;
		height: 9px;
		margin-left: auto;
		border: 2px solid #111;
		border-radius: 5px;
		background: #9adfe8;
	}
	& .swatch {
		border: 1px solid #8a5a20;
	}
}
.panel-head {
	display: flex;
	align-items: center;
	gap: 1px;
	height: 12px;
	padding: 0 7px 0 1px;
	background: #484848;

	& .tri {
		margin-left: auto;
	}
}
.clip-body {
	padding: 2px 7px 4px;
}
.pair {
	display: grid;
	grid-template-columns: 1fr 1fr;
	gap: 2px;
}
.field {
	display: flex;
	flex-wrap: wrap;
	justify-content: space-between;
	align-items: center;
	row-gap: 3px;

	& > input,
	& > .drop,
	& .signature {
		width: 100%;
		height: 9px;
	}
	& > input {
		padding-right: 1px;
	}
	&.lit > input {
		background: #2c2c2c;
	}
}
.pill {
	width: 15px;
	height: 9px;
	border-radius: 5px;
	background: #222;
	color: #6c6c6c;
}
.loop {
	position: relative;
	width: 100%;
	height: 9px;
	margin: 18px 0 3px;
	gap: 2px;
	color: #777;
	overflow: visible;

	& .icon {
		height: 8px;
		width: 9px;
	}
	&::before {
		content: '';
		position: absolute;
		top: -4px;
		left: 0;
		right: 0;
		height: 1px;
		background: #292929;
	}
}
.ruled {
	margin-top: 3px;
	padding-top: 2px;
	border-top: 1px solid #292929;
}
.signature {
	display: flex;
	justify-content: space-between;

	& input {
		width: 23px;
		text-align: center;
	}
}
.rounds {
	display: flex;
	gap: 2px;
}
.scale-row {
	display: flex;
	gap: 3px;
	margin-top: 3px;

	& .scale-toggle {
		width: 9px;
		height: 9px;
	}
	& .root {
		width: 29px;
	}
	& .grow {
		flex: 1;
	}
}
.audio-body {
	display: flex;
	padding-left: 7px;
}
.warp {
	width: 65px;
	padding: 2px 6px 0 0;
	display: flex;
	flex-direction: column;
	gap: 3px;
	border-right: 1px solid #292929;

	& > span {
		margin: -1px 0 -2px;
	}
}
.warp-buttons {
	display: grid;
	grid-template-columns: 1fr 1fr;
	gap: 3px;

	& input {
		text-align: center;
	}
	& button {
		height: 9px;
	}
	& .muted {
		background: #252525;
	}
}
.gain {
	padding: 2px 0 0 14px;
}
.gain-slider {
	position: relative;
	display: flex;
	flex-direction: column;
	gap: 23px;
	padding-left: 11px;

	& input,
	& svg {
		position: absolute;
		left: 0;
		top: 0;
		width: 24px;
		height: 42px;
		overflow: visible;
	}
	& input {
		opacity: 0;
	}
	& span {
		line-height: 8px;
	}
}

.sample {
	flex: 1;
	min-width: 0;
	display: flex;
	flex-direction: column;
	background: #363636;
}
.sample-head {
	position: relative;
	display: flex;
	align-items: center;
	gap: 3px;
	height: 12px;
	padding-left: 1px;

	& .icon {
		color: #777;
	}
	& .tab {
		position: absolute;
		left: 50%;
		top: 0;
		width: 35px;
		height: 11px;
		margin-left: -20px;
		background: #4a4a4a;
	}
}
.sample-loop {
	height: 8px;
	border: 1px solid #7c7c7c;
	border-right: 0;

	& svg {
		display: block;
		width: 6px;
		height: 6px;
		fill: none;
		stroke: #aaa;
	}
}
.sample-markers {
	display: flex;
	justify-content: space-between;
	height: 7px;
	border-bottom: 1px solid #2a2a2a;

	& i {
		width: 5px;
		height: 6px;
		background: #1ae8ff;
		clip-path: polygon(0 0, 100% 50%, 0 100%);
	}
	& .tri-end {
		clip-path: polygon(100% 0, 0 50%, 100% 100%);
	}
}
.sample-scrub {
	height: 13px;
	background: #2f2f2f;
	border-bottom: 1px solid #262626;
}
.sample-wave {
	position: relative;
	height: 155px;
	background: #3e3e3e;
	border-left: 1px solid #7c7c7c;

	& .waveform {
		display: block;
		width: 100%;
		height: 156px;
		fill: #1a1a1a;
	}
	& .zero {
		stroke: #2e2e2e;
		stroke-width: 1;
	}
	& .pointer {
		position: absolute;
		left: 294px;
		top: 60px;
		width: 9px;
		height: 14px;
		fill: #fff;
		stroke: #222;
	}
}
.sample-times {
	position: relative;
	height: 12px;
	border-bottom: 1px solid #2a2a2a;
	overflow: hidden;

	& span {
		position: absolute;
		top: 0;
		padding: 2px 0 0 2px;
		color: #a0a0a0;

		&::before {
			content: '';
			position: absolute;
			left: 0;
			top: 0;
			width: 1px;
			height: 8px;
			background: #6c6c6c;
		}
	}
}
.sample-scroll {
	flex: 1;
}

/* status bar */
.status {
	display: flex;
	height: 13px;

	& .info {
		width: 9px;
		height: 9px;
		margin: 2px 12px 0 2px;
		border-radius: 5px;
		background: #4a4a4a;
		color: #2a2a2a;
		text-align: center;
		font-weight: 700;
	}
	& p {
		flex: 1;
		padding: 2px 4px;
		border-radius: 2px;
		background: #363636;
	}
	& .up {
		width: 13px;
		margin-left: 6px;

		& svg {
			width: 6px;
			height: 6px;
			fill: currentColor;
		}
	}
	& .dark {
		background: #363636;
	}
}
.mini {
	position: relative;
	width: 138px;
	margin-left: 1px;
	background: #363636;

	& svg {
		display: block;
		width: 100%;
		height: 13px;
	}
	& i {
		position: absolute;
		left: 1px;
		top: -1px;
		width: 34px;
		height: 15px;
		border: 1px solid #8a8a8a;
		border-radius: 2px;
	}
}
.clip-chip {
	display: flex;
	align-items: center;
	justify-content: space-between;
	width: 60px;
	margin-left: 1px;
	padding-left: 4px;
	background: #363636;
	white-space: nowrap;

	& i {
		width: 11px;
		height: 11px;
		background: #161616;
	}
}
.levels {
	display: flex;
	align-items: center;
	gap: 4px;
	margin: 0 2px 0 11px;
}
.level-bars {
	width: 10px;
	height: 9px;
	background: linear-gradient(90deg, #4a4a4a 1px, transparent 1px 3px, #4a4a4a 3px 4px, transparent 4px 6px, #4a4a4a 6px 7px, transparent 7px 9px, #4a4a4a 9px);
}
</style>
